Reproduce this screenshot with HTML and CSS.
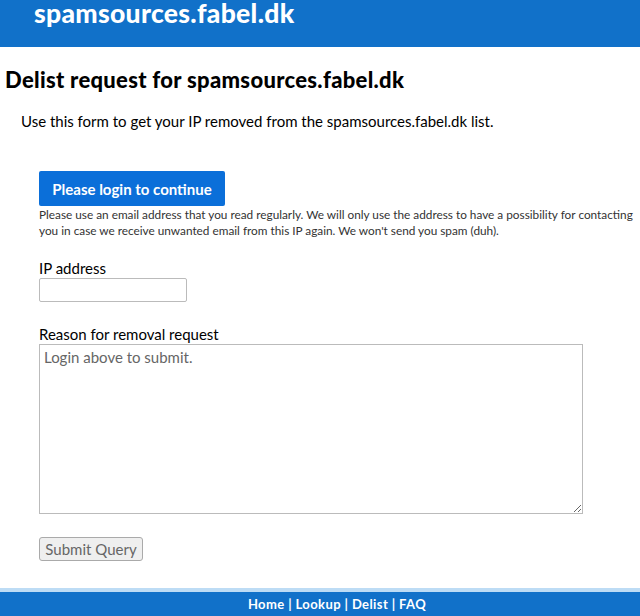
FILE: index.html
```html
<!DOCTYPE html>
<html>
<head>
<meta charset="utf-8">
<link rel="stylesheet" href="styles.css">
</head>
<body>
<header class="top">
  <h1 class="site">spamsources.fabel.dk</h1>
</header>
<main class="content">
  <h2 class="title">Delist request for spamsources.fabel.dk</h2>
  <p class="intro">Use this form to get your IP removed from the spamsources.fabel.dk list.</p>
  <form class="form">
    <button type="button" class="login">Please login to continue</button>
    <p class="note">Please use an email address that you read regularly. We will only use the address to have a possibility for contacting you in case we receive unwanted email from this IP again. We won't send you spam (duh).</p>
    <label class="label" for="ip">IP address</label>
    <input class="ip" id="ip" type="text">
    <label class="label label-reason" for="reason">Reason for removal request</label>
    <textarea class="reason" id="reason" placeholder="Login above to submit." disabled></textarea>
    <input class="submit" type="submit" value="Submit Query" disabled>
  </form>
</main>
<footer class="foot">
  <nav class="links"><a href="#">Home</a> | <a href="#">Lookup</a> | <a href="#">Delist</a> | <a href="#">FAQ</a></nav>
</footer>
</body>
</html>
```

FILE: styles.css
```css
* { box-sizing: border-box; }
html, body { margin: 0; padding: 0; }
body {
  font-family: Lato, "Noto Sans", sans-serif;
  color: #000;
  background: #fff;
  width: 640px;
  height: 616px;
  overflow: hidden;
  display: flex;
  flex-direction: column;
}
.top {
  background: #1171c9;
  height: 47px;
  padding-left: 34px;
  padding-top: 1px;
}
.site {
  margin: 0;
  color: #fff;
  font-size: 26.5px;
  font-weight: 900;
  line-height: 24px;
  letter-spacing: 0.3px;
}
.content { flex: 1; }
.title {
  margin: 20px 0 0 5px;
  font-size: 22px;
  font-weight: 900;
  line-height: 26px;
  letter-spacing: 0.3px;
}
.intro {
  margin: 18px 0 0 21px;
  font-size: 15px;
  line-height: 20px;
}
.form {
  display: flex;
  flex-direction: column;
  align-items: flex-start;
  padding-left: 39px;
  margin-top: 40px;
}
.login {
  background: #0b6fd9;
  color: #fff;
  border: 0;
  border-radius: 2px;
  font-family: inherit;
  font-size: 15px;
  font-weight: 700;
  height: 35px;
  width: 186px;
  padding: 0;
}
.note {
  margin: 1px 0 0 0;
  font-size: 11.8px;
  line-height: 16px;
  color: #333;
  width: 601px;
}
.label {
  margin-top: 19px;
  font-size: 15px;
  line-height: 20px;
}
.label-reason { margin-top: 22px; }
.ip {
  width: 148px;
  height: 24px;
  border: 1px solid #bbb;
  border-radius: 2px;
  margin: 0;
}
.reason {
  width: 544px;
  height: 170px;
  border: 1px solid #bbb;
  margin: 0;
  padding: 3px 4px;
  font-family: inherit;
  font-size: 15px;
  resize: both;
  background: #fff;
}
.reason::placeholder { color: #666; opacity: 1; }
.submit {
  margin-top: 23px;
  height: 24px;
  width: 104px;
  font-family: inherit;
  font-size: 15px;
  color: #666;
  background: #efefef;
  border: 1px solid #aaa;
  border-radius: 3px;
  padding: 0;
}
.foot {
  border-top: 4px solid #bddcf5;
  background: #1171c9;
  height: 28px;
  text-align: center;
  padding-left: 34px;
}
.links {
  color: #fff;
  font-size: 13px;
  font-weight: 700;
  line-height: 24px;
  letter-spacing: 0.4px;
}
.links a { color: #fff; text-decoration: none; }
```
